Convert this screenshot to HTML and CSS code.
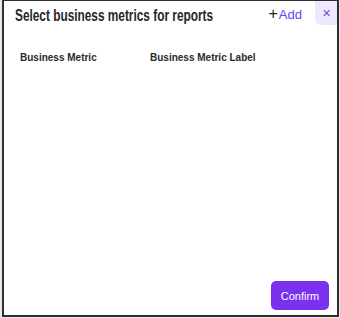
FILE: index.html
```html
<!DOCTYPE html>
<html lang="en">
<head>
    <meta charset="UTF-8">
    <title>Business metrics</title>
    <link rel="stylesheet" href="styles.css">
</head>
<body>
    <div class="dialog">
        <div class="header">
            <div class="title-wrap">
                <h2 class="title">Select business metrics for reports</h2>
            </div>
            <button class="add-btn"><span class="plus">+</span>Add</button>
            <button class="close-btn">&#x2715;</button>
        </div>
        <div class="columns">
            <div class="col col-metric">Business Metric</div>
            <div class="col col-label">Business Metric Label</div>
        </div>
        <div class="body"></div>
        <div class="footer">
            <button class="confirm-btn">Confirm</button>
        </div>
    </div>
</body>
</html>
```

FILE: styles.css
```css
html, body {
    margin: 0;
    padding: 0;
    background-color: #e9e9e9;
}
.dialog {
    box-sizing: border-box;
    width: 337px;
    height: 317px;
    margin-left: 2px;
    border: 2px solid #2e2e2e;
    border-top-width: 1px;
    background-color: #ffffff;
    display: flex;
    flex-direction: column;
    font-family: "Liberation Sans", Arial, sans-serif;
}
.header {
    display: flex;
    align-items: flex-start;
    height: 40px;
}
.title-wrap {
    flex: 1;
    min-width: 0;
    padding: 6px 0 0 11px;
}
.title {
    display: inline-block;
    margin: 0;
    white-space: nowrap;
    font-size: 16px;
    font-weight: bold;
    color: #262626;
    transform: scaleX(0.74);
    transform-origin: left center;
}
.add-btn {
    flex-shrink: 0;
    margin-top: 4px;
    padding: 0;
    border: none;
    background: none;
    font-family: "Liberation Sans", Arial, sans-serif;
    font-size: 13px;
    color: #6a3df0;
    cursor: pointer;
}
.plus {
    color: #222222;
    font-size: 16px;
    margin-right: 1px;
}
.close-btn {
    flex-shrink: 0;
    width: 22px;
    height: 24px;
    margin-left: 13px;
    padding: 0;
    border: none;
    border-bottom-left-radius: 6px;
    background-color: #efe7fd;
    color: #7b45e6;
    font-size: 11px;
    cursor: pointer;
}
.columns {
    display: flex;
    padding: 11px 0 0 16px;
    font-size: 10px;
    font-weight: bold;
    color: #2a2a2a;
}
.col-metric {
    width: 130px;
}
.body {
    flex: 1;
}
.footer {
    display: flex;
    justify-content: flex-end;
    padding: 0 8px 5px 0;
}
.confirm-btn {
    width: 58px;
    height: 29px;
    border: none;
    border-radius: 5px;
    background-color: #7a32f0;
    color: #ffffff;
    font-family: "Liberation Sans", Arial, sans-serif;
    font-size: 11px;
    cursor: pointer;
}
```
